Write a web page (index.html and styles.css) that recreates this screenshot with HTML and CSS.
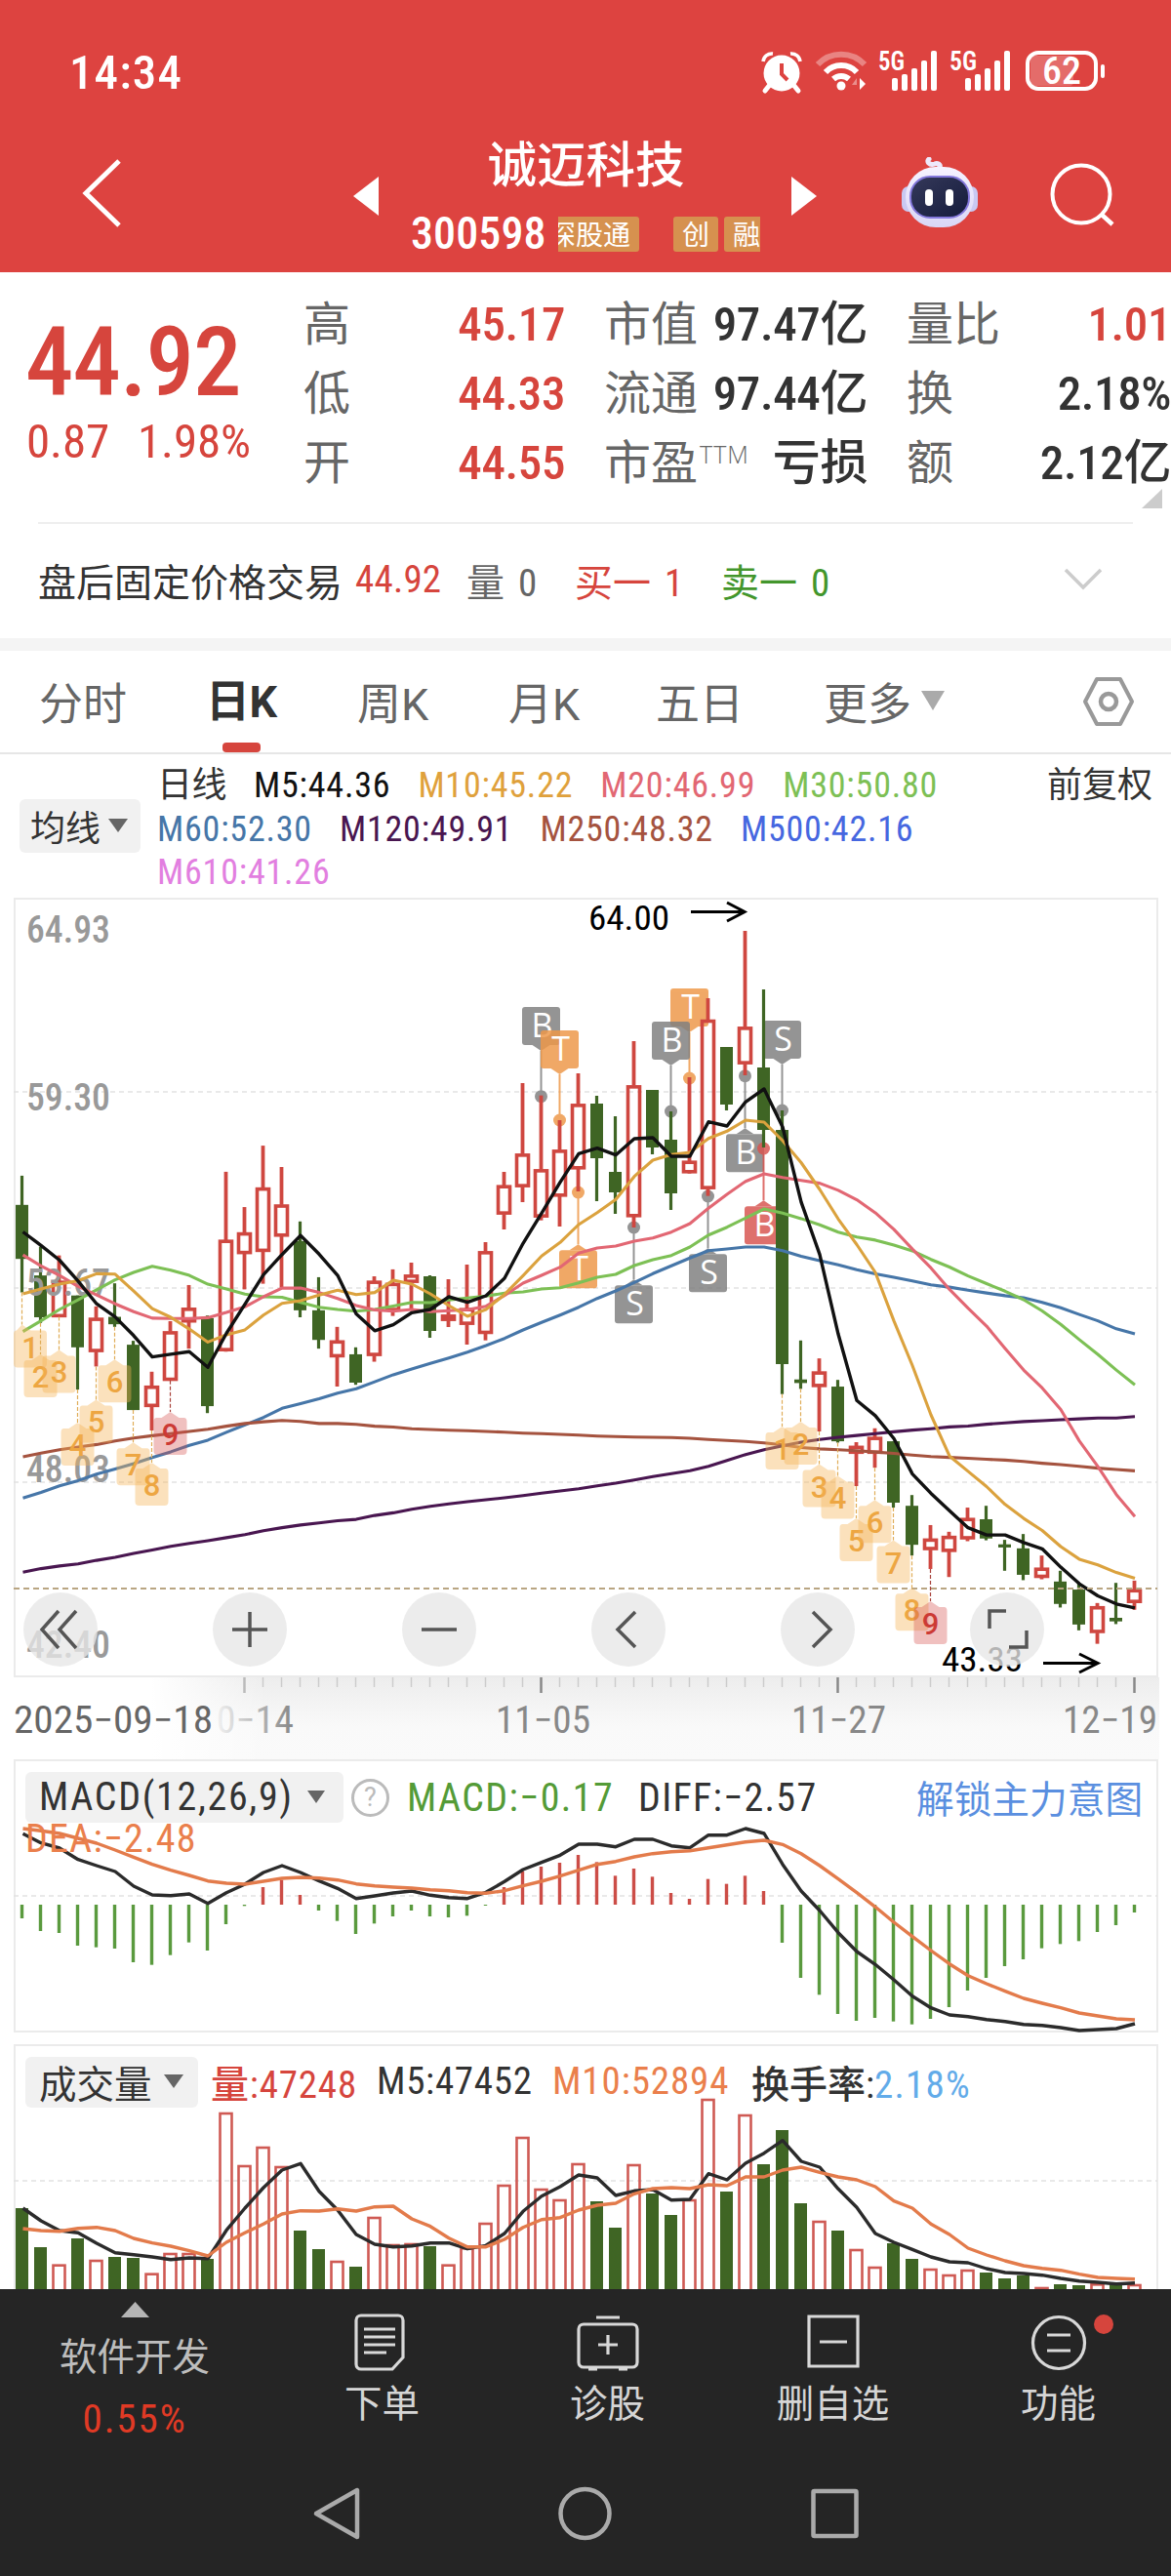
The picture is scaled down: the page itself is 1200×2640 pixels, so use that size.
FILE: index.html
```html
<!DOCTYPE html>
<html lang="zh-CN">
<head>
<meta charset="utf-8">
<title>诚迈科技 300598</title>
<link rel="stylesheet" href="styles.css">
</head>
<body>
<header class="top">
  <div class="status">
    <span class="clock">14:34</span>
    <svg class="status-icons" width="360" height="56" viewBox="776 46 360 56" fill="#fff">
      <circle cx="801" cy="75" r="18.5"/>
      <path d="M782 63a9 9 0 0 1 10-8M820 63a9 9 0 0 0-10-8" stroke="#fff" stroke-width="3.5" fill="none"/>
      <path d="M788 88l-4 5M814 88l4 5" stroke="#fff" stroke-width="5" stroke-linecap="round"/>
      <path d="M801 65v11l6 6" stroke="#dd4340" stroke-width="4" fill="none"/>
      <g fill="none" stroke="#fff" stroke-width="6">
        <path d="M838 66a33 33 0 0 1 48 0" opacity=".35"/>
        <path d="M846 74a22 22 0 0 1 32 0"/>
        <path d="M854 81a12 12 0 0 1 16 0"/>
      </g>
      <circle cx="862" cy="88" r="4.5"/>
      <path d="M881 80v12l6-6z"/><path d="M878 80l-5 7h5z" opacity=".4"/>
      <text x="900" y="72" font-size="27" textLength="27" lengthAdjust="spacingAndGlyphs" font-weight="600">5G</text>
      <text x="973" y="72" font-size="27" textLength="28" lengthAdjust="spacingAndGlyphs" font-weight="600">5G</text>
      <g id="sig"><rect x="914" y="80" width="6" height="13" rx="2"/><rect x="924" y="76" width="6" height="17" rx="2"/><rect x="934" y="70" width="6" height="23" rx="2"/><rect x="944" y="62" width="6" height="31" rx="2"/><rect x="954" y="52" width="6" height="41" rx="2"/></g>
      <use href="#sig" x="75"/>
      <rect x="1056" y="57" width="44" height="31" rx="4" opacity=".22"/>
      <rect x="1053" y="54" width="70" height="37" rx="11" fill="none" stroke="#fff" stroke-width="4"/>
      <rect x="1128" y="66" width="4" height="14" rx="2"/>
      <text x="1068" y="86" font-size="38" textLength="40" lengthAdjust="spacingAndGlyphs" font-weight="500">62</text>
    </svg>
  </div>
  <div class="titlebar">
    <svg class="back" width="50" height="80" viewBox="0 0 50 80"><path d="M42 7L8 40l34 33" fill="none" stroke="#fff" stroke-width="5"/></svg>
    <svg class="prev" width="26" height="40" viewBox="0 0 26 40"><path d="M26 0v40L0 20z" fill="#fff"/></svg>
    <div class="stock">
      <h1>诚迈科技</h1>
      <div class="code"><b>300598</b><div class="tags"><span class="cut">深股通</span><span class="gap">创</span><span>融</span></div></div>
    </div>
    <svg class="next" width="26" height="40" viewBox="0 0 26 40"><path d="M0 0v40l26-20z" fill="#fff"/></svg>
    <svg class="bot" width="80" height="74" viewBox="0 0 80 74">
      <defs><linearGradient id="shell" x1="0" y1="0" x2="0" y2="1"><stop offset="0" stop-color="#f6f2ff"/><stop offset="1" stop-color="#d9d6f6"/></linearGradient>
      <linearGradient id="visor" x1="0" y1="0" x2="1" y2="1"><stop offset="0" stop-color="#35395a"/><stop offset="1" stop-color="#141b3c"/></linearGradient></defs>
      <path d="M38 12c5-2 1-7-3-5-6 2-9-3-6-5" fill="none" stroke="#eee9fb" stroke-width="5" stroke-linecap="round"/>
      <rect x="1" y="30" width="14" height="26" rx="7" fill="#c9c9f2"/><rect x="65" y="30" width="14" height="26" rx="7" fill="#c9c9f2"/>
      <rect x="5" y="10" width="70" height="62" rx="31" fill="url(#shell)"/>
      <rect x="10" y="20" width="60" height="42" rx="20" fill="url(#visor)" stroke="#8478dc" stroke-width="2"/>
      <rect x="25" y="33" width="8" height="17" rx="4" fill="#fff"/><rect x="46" y="33" width="8" height="17" rx="4" fill="#fff"/>
    </svg>
    <svg class="search" width="70" height="70" viewBox="0 0 70 70"><circle cx="32" cy="34" r="29.5" fill="none" stroke="#fff" stroke-width="4"/><path d="M53 55l11 10" stroke="#fff" stroke-width="4.5"/></svg>
  </div>
</header>

<section class="quote">
  <div class="price"><strong>44.92</strong><div class="chg"><span>0.87</span><span>1.98%</span></div></div>
  <dl class="stats">
    <dt>高</dt><dd class="up">45.17</dd><dt>市值</dt><dd>97.47亿</dd><dt>量比</dt><dd class="up">1.01</dd>
    <dt>低</dt><dd class="up">44.33</dd><dt>流通</dt><dd>97.44亿</dd><dt>换</dt><dd>2.18%</dd>
    <dt>开</dt><dd class="up">44.55</dd><dt>市盈<sup>TTM</sup></dt><dd>亏损</dd><dt>额</dt><dd>2.12亿</dd>
  </dl>
  <svg class="corner" width="21" height="20"><path d="M21 0v20H0z" fill="#ccc"/></svg>
</section>

<section class="after">
  <span>盘后固定价格交易</span><span class="up a1">44.92</span><span class="gray a2">量 <i>0</i></span><span class="up a3">买一 <i>1</i></span><span class="down a4">卖一 <i>0</i></span>
  <svg class="chev" width="40" height="26" viewBox="0 0 40 26"><path d="M2 3l18 18L38 3" fill="none" stroke="#ccc" stroke-width="3.5"/></svg>
</section>

<nav class="tabs">
  <span class="t1">分时</span><span class="t2 on">日K</span><span class="t3">周K</span><span class="t4">月K</span><span class="t5">五日</span>
  <span class="t6">更多<svg width="24" height="20"><path d="M0 0h24L12 20z" fill="#aaa"/></svg></span>
  <svg class="hex" width="54" height="52" viewBox="0 0 54 52"><path d="M15 3h24l12 23-12 23H15L3 26z" fill="none" stroke="#999" stroke-width="4" stroke-linejoin="round"/><circle cx="27" cy="26" r="8" fill="none" stroke="#999" stroke-width="4.5"/></svg>
</nav>

<section class="legend">
  <span class="pill ma">均线<svg width="20" height="14"><path d="M0 0h20L10 14z" fill="#666"/></svg></span>
  <div class="mas">
    <div><span class="c0">日线</span><span class="c5">M5:44.36</span><span class="c10">M10:45.22</span><span class="c20">M20:46.99</span><span class="c30">M30:50.80</span></div>
    <div><span class="c60">M60:52.30</span><span class="c120">M120:49.91</span><span class="c250">M250:48.32</span><span class="c500">M500:42.16</span></div>
    <div><span class="c610">M610:41.26</span></div>
  </div>
  <span class="adj">前复权</span>
</section>

<section class="kchart">
  <svg id="k" width="1200" height="800" viewBox="0 920 1200 800"></svg>
  <div class="tools">
    <button><svg viewBox="-38 -38 76 76"><path d="M-2-19L-19 0-2 19M16-19L-1 0 16 19"/></svg></button>
    <button><svg viewBox="-38 -38 76 76"><path d="M-18 0h36M0-18v36"/></svg></button>
    <button><svg viewBox="-38 -38 76 76"><path d="M-18 0h36"/></svg></button>
    <button><svg viewBox="-38 -38 76 76"><path d="M7-18L-11 0 7 18"/></svg></button>
    <button><svg viewBox="-38 -38 76 76"><path d="M-5-18L13 0-5 18"/></svg></button>
    <button><svg viewBox="-38 -38 76 76"><path d="M-18-1v-18h17M2 18h18V1"/></svg></button>
  </div>
</section>

<section class="dates">
  <svg id="ticks" width="1200" height="84" viewBox="0 1719 1200 84"></svg>
</section>

<section class="panel macd">
  <svg id="m" width="1200" height="280" viewBox="0 1803 1200 280"></svg>
  <div class="head"><span class="pill">MACD(12,26,9)<svg width="18" height="13"><path d="M0 0h18L9 13z" fill="#666"/></svg></span>
    <span class="help">?</span><span class="mv">MACD:−0.17</span><span class="dv">DIFF:−2.57</span><span class="link">解锁主力意图</span></div>
  <div class="dea">DEA:−2.48</div>
</section>

<section class="panel vol">
  <svg id="v" width="1200" height="251" viewBox="0 2095 1200 251"></svg>
  <div class="head"><span class="pill">成交量<svg width="20" height="14"><path d="M0 0h20L10 14z" fill="#666"/></svg></span>
    <span class="v1">量:47248</span><span class="v2">M5:47452</span><span class="v3">M10:52894</span><span class="v4">换手率:<em>2.18%</em></span></div>
</section>

<footer class="bottom">
  <div class="actions">
    <div class="sector"><svg width="29" height="16"><path d="M14.500 0L29 16H0z" fill="#b5b5b5"/></svg><span>软件开发</span><b>0.55%</b></div>
    <div class="act"><svg viewBox="0 0 64 64"><path d="M10 4h38a5 5 0 0 1 5 5v38L42 59H10a5 5 0 0 1-5-5V9a5 5 0 0 1 5-5zM13 18h32M13 26h32M13 34h32M13 42h23"/></svg><span>下单</span></div>
    <div class="act"><svg viewBox="0 0 64 64"><path d="M7 13h50a5 5 0 0 1 5 5v34a5 5 0 0 1-5 5H7a5 5 0 0 1-5-5V18a5 5 0 0 1 5-5zM20 6h24M32 24v20M22 34h20M12 59h9M43 59h9"/></svg><span>诊股</span></div>
    <div class="act"><svg viewBox="0 0 64 64"><path d="M7 5h50v51H7zM18 31h28"/></svg><span>删自选</span></div>
    <div class="act"><svg viewBox="0 0 64 64"><circle cx="32" cy="32" r="26.500"/><path d="M20 24h24M20 40h24"/></svg><span>功能</span><i class="dot"></i></div>
  </div>
  <svg class="sys" width="1200" height="70" viewBox="0 2540 1200 70" fill="none" stroke="#aaa" stroke-width="4.500" stroke-linejoin="round"><path d="M324 2576l42-24v48z"/><circle cx="599.500" cy="2576" r="25"/><rect x="833.500" y="2553" width="44" height="46" rx="1"/></svg>
</footer>
<script src="script.js"></script>
</body>
</html>
```
FILE: styles.css
```css
* { box-sizing: border-box; }
body { margin: 0; width: 1200px; background: #fff; color: #333; font-family: "Roboto Condensed", "Noto Sans CJK SC", sans-serif; }
svg { display: block; flex: none; }
i, em { font-style: normal; }
.up { color: #d6453d; }
.down { color: #43962c; }
.gray { color: #666; }

.top { height: 279px; background: #dd4340; color: #fff; }
.status { display: flex; justify-content: space-between; align-items: center; height: 148px; padding: 0 64px 0 71px; }
.clock { font-size: 49px; font-weight: 500; letter-spacing: 1.1px; }
.titlebar { display: flex; height: 131px; padding-left: 80px; align-items: flex-start; }
.back { margin-top: 10px; }
.prev { margin: 33px 0 0 232px; }
.stock { width: 423px; text-align: center; }
.stock h1 { margin: -19px 0 0 2px; font: 500 50.5px/72px "Noto Sans CJK SC"; }
.code { display: flex; align-items: center; margin: 20px 0 0 33px; height: 38px; }
.code b { font-size: 46px; font-weight: 500; letter-spacing: .1px; width: 151px; text-align: left; margin-top: -2px; }
.tags { display: flex; width: 207px; overflow: hidden; gap: 6px; }
.tags span { flex: none; height: 36px; padding: 0 9px; background: #d6914f; border-radius: 3px; font: 28px/34px "Noto Sans CJK SC"; }
.tags .cut { margin-left: -19px; }
.tags .gap { margin-left: 29px; }
.next { margin-top: 33px; }
.bot { margin: 13px 0 0 86px; }
.search { margin: 17px 0 0 73px; }

.quote { position: relative; display: flex; height: 257px; padding-left: 27px; }
.quote::after { content: ""; position: absolute; left: 39px; right: 39px; bottom: -1px; height: 2px; background: #eee; }
.price { width: 285px; color: #d6453d; }
.price strong { display: block; margin-top: 34px; font-size: 99px; line-height: 116px; font-weight: 500; letter-spacing: -1px; margin-left: -1px; }
.chg { display: flex; font-size: 49px; line-height: 58px; font-weight: 450; margin-top: -5px; letter-spacing: -.1px; }
.chg span:first-child { width: 114px; }
.stats { display: grid; grid-template-rows: repeat(3, 71px); margin: 18px 0 0; width: 889px; grid-template-columns: 110px 158px 150px 160px 151px 160px; line-height: 71px; font-size: 48px; }
.stats dt { color: #666; font-size: 48px; white-space: nowrap; }
.stats dt:nth-of-type(3n+2), .stats dt:nth-of-type(3n) { padding-left: 40px; }
.stats dd { margin: 0; text-align: right; font-weight: 500; font-size: 49px; letter-spacing: -.4px; white-space: nowrap; }
.stats sup { font: 300 25px/20px "Open Sans"; vertical-align: 16px; margin-left: 2px; letter-spacing: 1px; }
.corner { position: absolute; left: 1170px; top: 222px; }

.after { display: flex; align-items: center; height: 118px; padding: 0 0 3px 39px; font-size: 39px; white-space: nowrap; }
.a1 { margin-left: 13px; width: 114px; letter-spacing: .2px; font-weight: 450; }
.a2 { width: 111px; }
.a3 { width: 150px; }
.a4 { width: 351px; }
.after i { margin-left: 5px; font-weight: 450; }
.chev { margin-top: 0; }

.tabs { position: relative; display: flex; align-items: center; height: 119px; border-top: 13px solid #f4f4f4; border-bottom: 2px solid #e6e6e6; font-size: 45px; color: #666; padding-left: 40px; font-family: Roboto, "Noto Sans CJK SC", sans-serif; }
.tabs > span { white-space: nowrap; padding-bottom: 2px; }
.t1 { width: 171px; } .t2 { width: 155px; } .t3 { width: 155px; } .t4 { width: 151px; } .t5 { width: 172px; } .t6 { width: 265px; display: flex; align-items: center; gap: 10px; }
.tabs .on { font-weight: 700; color: #333; height: 104px; line-height: 106px; position: relative; padding: 0; letter-spacing: -.5px; }
.tabs .on::after { content: ""; position: absolute; left: 17px; bottom: 0; width: 39px; height: 10px; border-radius: 4px; background: #d6453d; }

.legend { display: flex; height: 147px; padding-left: 20px; align-items: flex-start; font-size: 36px; }
.pill { display: flex; align-items: center; background: #f1f1f1; border-radius: 6px; color: #333; flex: none; }
.ma { width: 124px; height: 55px; margin-top: 46px; padding: 0 0 2px 11px; gap: 8px; }
.mas { width: 911px; padding: 10px 0 0 17px; line-height: 44.500px; letter-spacing: .8px; font-weight: 450; }
.mas div { display: flex; gap: 28px; white-space: nowrap; }
.c0 { letter-spacing: -.5px; font-weight: 400; } .c5 { color: #111; } .c10 { color: #dfa13c; } .c20 { color: #e26773; } .c30 { color: #7dc055; }
.c60 { color: #4676a8; } .c120 { color: #491650; } .c250 { color: #a5533f; } .c500 { color: #4667e0; } .c610 { color: #e27fe0; }
.adj { line-height: 44.500px; margin-top: 10px; margin-left: 18px; }

.kchart { position: relative; height: 799px; }
.tools { position: absolute; left: 24px; top: 712px; display: flex; gap: 118px; }
.tools button { width: 76px; height: 76px; border: 0; padding: 0; border-radius: 50%; background: rgba(231, 231, 231, .78); }
.tools path { fill: none; stroke: #555; stroke-width: 3.500; }
.dates { height: 84px; background: linear-gradient(90deg, #fff 13%, rgba(255, 255, 255, 0) 23%), linear-gradient(#ededed, #f9f9f9 60%, #fafafa); margin-right: 12px; }

.panel { position: relative; }
.macd { height: 292px; }
.vol { height: 251px; }
.head { position: absolute; left: 26px; top: 12px; display: flex; align-items: center; font-size: 40px; white-space: nowrap; height: 54px; font-weight: 450; }
.head .pill { height: 52px; padding: 0 0 2px 14px; }
.macd .pill { width: 326px; gap: 14px; letter-spacing: 1.7px; }
.vol .pill { width: 177px; gap: 12px; font-size: 38.500px; font-weight: 400; }
.help { width: 39px; height: 39px; margin-left: 8px; border: 3px solid #bbb; border-radius: 50%; color: #bbb; font: 400 27px/33px Roboto; text-align: center; }
.mv { margin-left: 18px; width: 237px; color: #549b37; letter-spacing: 1.400px; }
.dv { width: 285px; letter-spacing: 1.300px; }
.link { color: #5a8fe0; font-size: 38.700px; font-weight: 400; margin-top: -3px; }
.dea { position: absolute; left: 26px; top: 59px; font-size: 40px; line-height: 46px; color: #ea7f4c; letter-spacing: 1.200px; font-weight: 450; }
.v1 { margin-left: 13px; width: 170px; color: #d6453d; letter-spacing: .8px; }
.v2 { width: 180px; letter-spacing: .7px; }
.v3 { width: 204px; color: #ea7f4c; letter-spacing: .9px; }
.v4 em { color: #62abe9; letter-spacing: 1.2px; }
.vol .head { font-size: 39px; }
.vol .head > span:not(.pill) { margin-top: -2px; }

.bottom { height: 294px; background: #252525; color: #d5d5d5; }
.actions { display: flex; height: 194px; font-size: 38.500px; }
.actions > div { display: flex; flex-direction: column; align-items: center; position: relative; }
.sector { width: 276px; padding-top: 13px; color: #bdbdbd; }
.sector span { margin-top: 13px; line-height: 56px; }
.sector b { font-weight: 400; color: #e03a25; font-size: 41px; line-height: 50px; margin-top: 10px; letter-spacing: 1.9px; }
.act { width: 231px; padding-top: 23px; }
.act svg { width: 64px; height: 64px; fill: none; stroke: #d8d8d8; stroke-width: 3.200; }
.act span { margin-top: 3px; line-height: 56px; }
.dot { position: absolute; left: 152px; top: 26px; width: 20px; height: 20px; border-radius: 50%; background: #d6453d; }
```
FILE: script.js
```js
const STEP = 19, X0 = 22.5, N = 61;
const X = i => X0 + STEP * i;
const GREEN = '#3f6524', RED = '#cf4740';

// Raw plot units of the three stretches of the series, mapped to page pixels.
const A = v => 900 + v / 2.24, B = v => 900 + v / 3, C = v => 1000 + v / 2.1778;
const axisFor = i => (i < 21 ? A : i < 42 ? B : C);

const candles = `G683,750,874,951 G846,912,1008,1021 R866,925,1007,1007 G958,958,1077,1174 R983,1010,1087,1121 G930,1007,1024,1030 G1062,1071,1221,1221 R1133,1166,1213,1268 R1017,1041,1153,1153 R934,987,1019,1080 G1004,1010,1212,1228 R674,831,1085,1087 R755,814,862,944 R614,711,857,931 R663,750,822,940 G788,833,992,1008 G916,992,1060,1080 R1030,1062,1099,1167 G1077,1093,1158,1163 R914,925,1096,1110 R898,930,993,1005
R1182,1220,1243,1325 G1221,1224,1392,1413 R1233,1343,1360,1380 R1188,1323,1372,1434 R1119,1148,1400,1421 R903,945,1033,1080 R630,848,949,996 R668,896,1042,1052 R744,836,978,1071 R600,695,894,963 G669,693,861,993 G732,903,966,1032 R501,638,1041,1074 G651,651,828,849 G717,804,969,1020 R612,870,906,908 R369,436,955,977 G519,519,696,714 R162,458,571,606 G342,582,774,828 G714,774,1494,1586
G814,901,909,922 R854,884,917,1017 G902,917,1039,1042 R1041,1050,1066,1139 R1010,1030,1066,1098 G1039,1039,1176,1187 G1159,1183,1270,1294 R1226,1257,1281,1324 R1241,1251,1285,1342 R1187,1211,1257,1262 G1183,1213,1256,1260 G1259,1269,1276,1328 G1246,1278,1337,1349 R1294,1322,1343,1347 G1328,1352,1402,1410 G1354,1370,1448,1461 R1400,1408,1466,1491 G1355,1433,1441,1447 R1350,1370,1399,1415`.split(/\s+/);

const ma = {
  '#4676a8': [[1423,1410,1395,1383,1368,1356,1344,1330,1317,1302,1290,1272,1255,1238,1217,1206,1195,1182,1172,1156,1140],[1509,1492,1475,1457,1437,1415,1389,1366,1343,1319,1292,1269,1243,1216,1192,1168,1145,1140,1134,1134,1145],[626,636,645,656,665,673,681,690,695,702,708,714,719,729,741,756,770,788,799]],
  '#a5533f': [[1328,1320,1312,1306,1300,1292,1285,1280,1275,1270,1265,1258,1252,1248,1245,1247,1252,1252,1254,1258,1260],[1693,1695,1697,1699,1701,1703,1706,1708,1710,1712,1715,1717,1718,1719,1720,1722,1726,1729,1732,1736,1742],[1053,1056,1058,1060,1063,1066,1070,1073,1075,1077,1079,1081,1084,1088,1091,1095,1099,1102,1105]],
  '#491650': [[1593,1585,1579,1574,1566,1559,1550,1542,1534,1527,1521,1514,1507,1498,1491,1485,1480,1475,1472,1463,1457],[1940,1931,1924,1917,1911,1905,1898,1891,1884,1877,1868,1860,1850,1840,1831,1822,1808,1790,1772,1757,1745],[1041,1035,1030,1026,1022,1018,1014,1011,1007,1005,1001,998,995,993,991,989,987,987,984]],
  '#7dc055': [[1041,1016,990,968,945,922,905,891,900,912,932,943,955,961,962,974,985,990,994,990,982],[1304,1305,1297,1291,1285,1276,1272,1263,1259,1244,1227,1218,1191,1173,1160,1134,1097,1073,1045,1017,1030],[542,556,572,583,590,601,614,633,650,670,687,704,723,748,778,812,845,880,913]],
  '#e26773': [[865,890,912,937,957,977,995,1010,1011,1011,1009,997,984,961,941,941,951,965,981,991,994],[1326,1333,1330,1327,1316,1283,1245,1221,1196,1153,1137,1131,1116,1106,1088,1062,1015,972,932,909,920],[457,463,479,500,529,566,610,652,700,742,782,832,880,920,968,1038,1095,1158,1207]],
  '#dba23e': [[954,943,932,924,908,909,948,988,1008,1035,1065,1048,1037,1003,976,970,957,946,956,951,923],[1248,1278,1314,1347,1326,1280,1222,1162,1120,1065,1028,988,917,867,850,843,800,778,744,750,807],[417,477,543,600,662,770,870,980,1072,1106,1140,1180,1211,1238,1274,1302,1315,1332,1345]],
  '#111': [[812,843,877,925,977,1007,1050,1099,1093,1087,1123,1045,978,910,864,820,863,912,1000,1039,1025],[1336,1326,1287,1304,1284,1230,1123,1030,935,847,830,851,801,798,855,855,749,762,688,648,765],[505,622,800,948,982,1033,1112,1155,1194,1232,1248,1248,1265,1279,1320,1357,1384,1402,1411]]
};

const rect = (x, y, w, h, extra) => `<rect x="${x}" y="${y}" width="${w}" height="${h}" ${extra}/>`;
const line = (x1, y1, x2, y2, c, w, extra = '') => `<path d="M${x1} ${y1}L${x2} ${y2}" stroke="${c}" stroke-width="${w}" ${extra}/>`;
const poly = (ys, c, w = 3.4) => `<polyline points="${ys.map((y, i) => (X(i) + (i ? 0.5 : 1)) + ',' + y.toFixed(1)).join(' ')}" fill="none" stroke="${c}" stroke-width="${w}" stroke-linejoin="round"/>`;
const text = (s, x, y, size, fill, len, extra = '') => `<text x="${x}" y="${y}" font-size="${size}" fill="${fill}" textLength="${len}" lengthAdjust="spacingAndGlyphs" ${extra}>${s}</text>`;
const grid = y => line(14, y, 1186, y, '#e2e2e2', 1.5, 'stroke-dasharray="5 4"');
const frame = (y, h) => rect(15, y, 1171, h, 'fill="none" stroke="#ebebeb" stroke-width="2"');

// ---- price chart ----
let k = frame(921, 797) + grid(1119) + grid(1320) + grid(1519);

const flags = [
  [28, 'B', 396, 671, 0], [29, 'T', 468, 744, 1], [36, 'T', 339, 615, 1], [35, 'B', 441, 717, 0], [41, 'S', 438, 714, 0],
  [30, 'T', 1144, 966, 1], [33, 'S', 1252, 1074, 0], [37, 'S', 1156, 978, 0], [39, 'B', 787, 608, 0], [40, 'B', 1009, 831, 2]
];
for (const [i, ch, top, dot, kind] of flags) {
  const c = ['#808080', '#ee9849', '#d85550'][kind], x = X(i), y = B(top), d = B(dot), down = d > y;
  const tip = down ? y + 45 : y - 6, base = down ? y + 39 : y;
  k += `<g fill="${c}" opacity=".84">` + line(x, tip, x, d, c, 2) + `<circle cx="${x}" cy="${d}" r="6.5"/>` +
    rect(x - 19.5, y, 39, 39, 'rx="3"') + `<path d="M${x - 9} ${base}L${x} ${tip}L${x + 9} ${base}z"/></g>` +
    `<text x="${x + 1}" y="${y + 31}" font-size="34" text-anchor="middle" fill="#fff" font-family="Open Sans">${ch}</text>`;
}

candles.forEach((s, i) => {
  const [h, o, c, l] = s.slice(1).split(',').map(v => axisFor(i)(+v)), x = X(i);
  if (s[0] === 'G') k += line(x, h, x, l, GREEN, 3.2) + rect(x - 6.5, o, 13, c - o, `fill="${GREEN}"`);
  else k += line(x, h, x, o, RED, 3.8) + line(x, c, x, l, RED, 3.8) + rect(x - 6, o + 1.2, 12, Math.max(c - o - 2.4, 2), `fill="none" stroke="${RED}" stroke-width="3.6"`);
});

[['64.93', 966], ['59.30', 1137.5], ['53.67', 1327.7], ['48.03', 1519], ['42.40', 1699]].forEach(([s, y]) => k += text(s, 27, y, 39, '#999', 86, 'font-weight="500"'));
for (const c in ma) k += poly(ma[c].flatMap((seg, n) => seg.map([A, B, C][n])), c, c === '#111' ? 3.4 : 3.1);
k += line(14, 1628, 1186, 1628, '#b9a582', 1.8, 'stroke-dasharray="6 4"');

const badges = [[0,1,A(1025)],[1,2,A(1093)],[2,3,A(1083)],[3,4,A(1250)],[4,5,A(1197)],[5,6,A(1105)],[6,7,A(1295)],[7,8,A(1342)],[8,9,A(1225)],
  [41,1,C(1006)],[42,2,C(995)],[43,3,C(1090)],[44,4,C(1116)],[45,5,C(1211)],[46,6,C(1170)],[47,7,C(1260)],[48,8,C(1366)],[49,9,C(1396)]];
for (const [i, n, y] of badges) {
  const x = X(i), cx = Math.max(x, 31), hot = n === 9, low = axisFor(i)(+candles[i].split(',')[3]);
  k += line(x, low, x, y, hot ? '#a8433c' : '#e0ad58', 1.2, 'stroke-dasharray="4 2"') +
    `<path d="M${x} ${y}L${x + 9} ${y + 6}H${cx + 14}q3 0 3 4V${y + 40}q0 4-4 4H${cx - 13}q-4 0-4-4V${y + 10}q0-4 3-4L${Math.max(x - 9, cx - 14)} ${y + 6}z" fill="${hot ? 'rgba(214,80,78,.36)' : 'rgba(244,180,88,.4)'}"/>` +
    `<text x="${cx}" y="${y + 34}" font-size="31" font-weight="500" text-anchor="middle" font-family="Roboto" fill="${hot ? '#cc3a35' : '#eda642'}">${n}</text>`;
}
k += text('64.00', 603, 953, 35, '#000', 83) + `<path d="M708 934.5H762M745 925L763 934.500L745 944" fill="none" stroke="#000" stroke-width="3"/>`;
k += text('43.33', 965, 1712.5, 35, '#000', 83) + `<path d="M1069 1704.500H1124M1106 1695L1125 1704.500L1106 1714" fill="none" stroke="#000" stroke-width="3"/>`;
document.getElementById('k').innerHTML = k;

// ---- date ruler ----
let t = '';
for (let i = 12; i < N; i++) {
  const major = (i - 12) % 16 === 0;
  t += line(X(i), 1719, X(i), major ? 1735 : 1729, major ? (i === 12 ? '#bbb' : '#888') : '#ccc', major ? 2.5 : 1.5);
}
t += `<defs><linearGradient id="fade" gradientUnits="userSpaceOnUse" x1="215" y1="0" x2="300" y2="0"><stop offset="0" stop-color="#888" stop-opacity="0"/><stop offset="1" stop-color="#888"/></linearGradient><clipPath id="cut"><rect x="219" y="1719" width="200" height="84"/></clipPath></defs>`;
t += '<g clip-path="url(#cut)">' + text('10−14', 202, 1776, 39, 'url(#fade)', 99) + '</g>' +
  text('2025−09−18', 14, 1776, 39, '#666', 204, 'font-weight="450"') + text('11−05', 508, 1776, 39, '#888', 97, 'font-weight="450"') + text('11−27', 811, 1776, 39, '#888', 97, 'font-weight="450"') + text('12−19', 1089, 1776, 39, '#888', 97, 'font-weight="450"');
document.getElementById('ticks').innerHTML = t;

// ---- MACD ----
const M = v => 1790 + v / 3;
const diff = [268,296,312,347,366,384,429,456,458,453,482,449,423,387,366,387,413,436,467,459,450,444,457,464,467,448,415,378,356,334,300,300,308,285,285,305,311,272,272,252,267,362,444,504,572,630,670,717,767,803,825,830,839,845,854,857,864,873,870,867,852];
const dea = [252,259,267,282,297,318,340,362,380,396,413,420,423,414,405,402,404,410,422,428,432,435,440,443,449,451,443,428,414,398,380,362,353,339,329,323,320,311,302,293,288,301,329,366,407,449,493,540,584,627,668,704,729,752,774,789,803,819,828,837,840];
const hist = [528,567,573,612,617,621,663,671,641,602,627,546,490,432,410,456,504,536,576,544,522,504,522,525,520,489,432,384,369,357,333,355,397,375,400,450,468,407,422,397,444,603,711,763,822,843,834,845,854,837,801,750,711,675,654,620,607,598,570,549,510];
let m = frame(1804, 278) + grid(1943);
hist.forEach((v, i) => m += line(X(i), M(486), X(i), M(v), v > 486 ? '#5a9a3e' : '#cc4d47', 3.4));
m += poly(diff.map(M), '#2b2b2b') + poly(dea.map(M), '#e37b4b');
document.getElementById('m').innerHTML = m;

// ---- volume ----
const V = v => 2080 + v / 3;
const vols = 'G549 G669 R722 G642 R708 G699 G702 R749 R687 R687 G705 R255 R417 R360 R420 G618 G675 R711 G729 R576 R660 R657 G666 R722 R670 R594 R477 R330 R489 R522 R411 G528 G609 R414 G504 G570 R522 R213 G498 R261 G414 G309 G534 R588 G618 R675 R729 G657 G705 R735 R753 R738 G747 G765 G756 R792 G783 G786 R781 G784 R783'.split(' ');
const v5 = [549,588,618,625,657,686,692,699,707,702,704,617,549,486,432,412,497,555,630,660,668,665,656,656,674,664,627,559,512,483,447,456,510,496,492,524,522,443,462,411,380,341,405,423,490,547,627,654,676,699,714,717,735,747,750,755,765,773,777,782,779];
const v10 = [612,618,620,611,608,618,642,656,666,680,696,654,625,598,567,557,558,551,558,545,543,582,605,641,668,668,645,608,584,578,555,540,534,505,489,486,489,477,480,453,453,432,423,439,453,462,483,527,549,598,630,672,693,711,726,734,740,752,762,765,767];
let v = frame(2096, 300) + grid(2235);
vols.forEach((s, i) => {
  const y = V(+s.slice(1)), x = X(i);
  v += s[0] === 'G' ? rect(x - 6.5, y, 13, 2400 - y, `fill="${GREEN}"`) : rect(x - 6, y + 1, 12, 2400 - y, 'fill="none" stroke="#cf5a54" stroke-width="2.6"');
});
v += poly(v5.map(V), '#2b2b2b') + poly(v10.map(V), '#e37b4b');
document.getElementById('v').innerHTML = v;
```
